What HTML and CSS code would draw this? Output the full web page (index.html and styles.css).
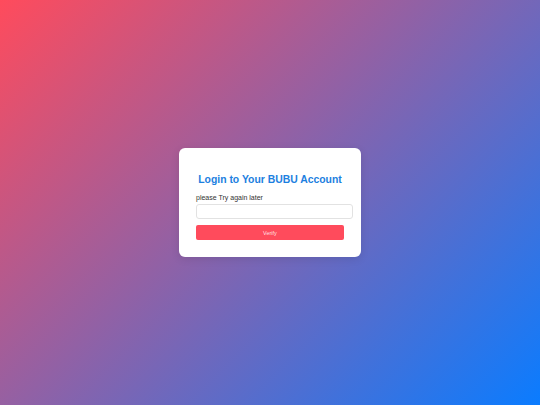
FILE: index.html
```html
<!DOCTYPE html>
<html>
<head>
<meta charset="utf-8">
<link rel="stylesheet" href="styles.css">
</head>
<body>
<div class="card">
  <h2 class="title">Login to Your BUBU Account</h2>
  <label class="label" for="code">please Try again later</label>
  <input class="input" id="code" type="text">
  <button class="btn">Verify</button>
</div>
</body>
</html>
```
FILE: styles.css
```css
html, body {
  margin: 0;
  height: 100%;
}
body {
  font-family: "Liberation Sans", Arial, sans-serif;
  background: linear-gradient(135deg, #ff4b5c 0%, #0a7cff 100%);
  display: flex;
  align-items: center;
  justify-content: center;
}
.card {
  width: 148px;
  padding: 17px;
  background: #fff;
  border-radius: 6px;
  box-shadow: 0 2px 8px rgba(0,0,0,0.1);
  display: flex;
  flex-direction: column;
}
.title {
  margin: 8px 0 6px;
  font-size: 10.4px;
  line-height: 14px;
  font-weight: bold;
  color: #1c80e0;
  text-align: center;
  white-space: nowrap;
  align-self: center;
}
.label {
  font-size: 7px;
  line-height: 9px;
  color: #333;
  margin-bottom: 2px;
}
.input {
  width: 147px;
  box-sizing: content-box;
  height: 13px;
  padding: 0 4px;
  margin: 0 0 6px;
  border: 1px solid #e2e2e2;
  border-radius: 3px;
  font-size: 8px;
}
.btn {
  height: 15px;
  padding: 0;
  border: none;
  border-radius: 2px;
  background: #ff4b5c;
  color: rgba(255,255,255,0.85);
  font-family: "Liberation Sans", Arial, sans-serif;
  font-size: 5.5px;
}
```
